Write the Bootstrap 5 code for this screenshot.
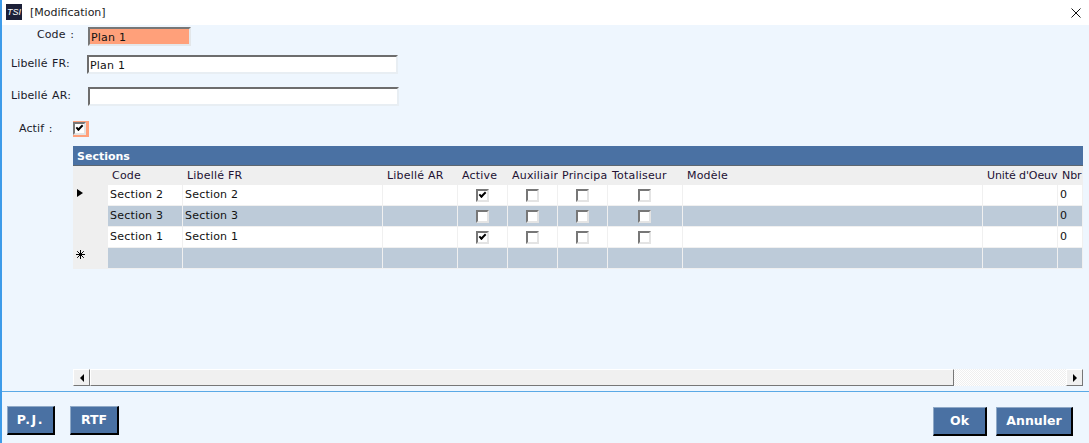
<!DOCTYPE html>
<html lang="fr"><head><meta charset="utf-8"><title>Modification</title>
<link href="https://cdn.jsdelivr.net/npm/bootstrap@5.3.0/dist/css/bootstrap.min.css" rel="stylesheet">
<style>
html,body{height:100%;margin:0}
body{font-family:"DejaVu Sans",Verdana,sans-serif;font-size:11px;line-height:13px;color:#000;background:#eef6fe;overflow:hidden}
.shell{width:1089px;height:443px;border-left:2px solid #3d9be9;display:flex;flex-direction:column}
.titlebar{height:25px;background:#fff;padding-left:4px;font-size:11px;color:#222}
.logo{width:16px;height:16px;background:#1c2038;color:#fff;font:italic 400 9px/16px "Liberation Sans",sans-serif;text-align:center;margin-right:8px;margin-top:-1px}
.closer{margin-left:auto;margin-right:8px}
.formzone{height:121px;position:relative}
.line{display:flex;align-items:flex-start}
.lbl{color:#1a1a2a;letter-spacing:.1px;word-spacing:1px}
.sunk{height:19px;border:2px solid;border-color:#6d6d6d #e8eef3 #e8eef3 #6d6d6d;background:#fff;padding:2px 1px 0 1px;font-size:11px;line-height:13px;color:#111;letter-spacing:.2px}
.sunk.code{background:#ffa07a;width:103px;border-color:#777 #e3e7ea #e3e7ea #777}
.l1{padding:2px 0 0 0;height:30px}.l1 .lbl{margin-left:35px;margin-top:1px;width:51px}
.l2{height:32px}.l2 .lbl{margin-left:9px;margin-top:2px;width:76px}.l2 .sunk{width:311px}
.l3{height:34px}.l3 .lbl{margin-left:9px;margin-top:2px;width:77px}.l3 .sunk{width:311px}
.l4 .lbl{margin-left:17px;margin-top:1px;width:54px}
.focusbox{width:16px;height:16px;background:#ffa07a;padding:1px 3px 3px 0;display:block}
.cb{display:inline-block;width:13px;height:13px;border:2px solid;border-color:#777 #e4e4e4 #e4e4e4 #777;background:#fff;position:relative;vertical-align:top}
.cb.on::after{content:"";position:absolute;left:1px;top:1px;width:7px;height:4px;border-left:2px solid #000;border-bottom:2px solid #000;transform:rotate(-45deg)}
.gridwrap{margin-left:71px;width:1010px;height:223px;position:relative}
.gridtitle{height:20px;background:#4a71a3;border-bottom:1px solid #5d6770;color:#fff;font-weight:700;padding:4px 0 0 4px;line-height:13px}
table.dg{table-layout:fixed;border-collapse:separate;border-spacing:0;width:1010px;letter-spacing:.2px}
table.dg th,table.dg td{padding:0;font-weight:400;overflow:hidden;white-space:nowrap;height:21px;vertical-align:middle}
table.dg thead th{height:19px;background:#efefef;color:#221133;padding-left:4px}
table.dg thead th.tight{letter-spacing:-.1px}
table.dg tbody td{border-right:1px solid #f0f0f0;border-bottom:1px solid #f0f0f0;background:#fff;padding-left:2px;padding-bottom:1px;color:#111}
table.dg tbody tr.alt td{background:#bdcbd9}
table.dg tbody td.rh,table.dg tbody tr.alt td.rh{background:#efefef;border:0;padding:0;position:relative}
table.dg tbody td.ct{text-align:center;padding:0 1px 0 0;line-height:0}
.arrow{position:absolute;left:4px;top:4px;width:0;height:0;border-left:6px solid #000;border-top:4px solid transparent;border-bottom:4px solid transparent}
.star{position:absolute;left:3px;top:2px}
.hscroll{position:absolute;left:0;top:223px;width:1010px;height:17px;display:flex;background:repeating-conic-gradient(#fff 0 25%,#efefef 0 50%) 0 0/2px 2px}
.sbtn{width:17px;height:17px;background:#f0f0f0;border:1px solid;border-color:#fff #777 #777 #fff;display:flex;align-items:center;justify-content:center}
.sthumb{width:864px;height:17px;background:#f0f0f0;border:1px solid;border-color:#fff #777 #777 #fff}
.ar-l{border-right:4px solid #000;border-top:4px solid transparent;border-bottom:4px solid transparent}
.ar-r{border-left:4px solid #000;border-top:4px solid transparent;border-bottom:4px solid transparent}
.rule{position:absolute;left:2px;top:391px;width:1087px;height:1px;background:#5aa9e6}
.foot{position:absolute;left:2px;top:406px;width:1087px;height:30px}
.tbtn{position:absolute;border:0;background:#4a71a3;color:#fff;font-weight:700;font-size:12.5px;line-height:14px;padding:0;text-align:center;border-top:1px solid #8fa9c7;border-left:1px solid #8fa9c7;border-right:2px solid #000;border-bottom:2px solid #000;border-radius:0}
.b1{left:5px;top:0;width:48px;height:29px;letter-spacing:1.6px}.b2{left:68px;top:0;width:49px;height:29px}
.b3{left:931px;top:1px;width:54px;height:29px}.b4{left:994px;top:1px;width:77px;height:29px}
</style></head><body>
<div class="shell">
<div class="titlebar d-flex align-items-center"><span class="logo">TSI</span><span>[Modification]</span>
<svg class="closer" width="10" height="10" viewBox="0 0 10 10"><path d="M.5.5l9 9M9.5.5l-9 9" stroke="#111" stroke-width="1" fill="none"/></svg></div>
<div class="formzone">
<div class="line l1"><span class="lbl">Code :</span><div class="sunk code">Plan 1</div></div>
<div class="line l2"><span class="lbl">Libellé FR:</span><div class="sunk">Plan 1</div></div>
<div class="line l3"><span class="lbl">Libellé AR:</span><div class="sunk"></div></div>
<div class="line l4"><span class="lbl">Actif :</span><span class="focusbox"><span class="cb on"></span></span></div>
</div>
<div class="gridwrap">
<div class="gridtitle">Sections</div>
<table class="dg">
<colgroup><col style="width:35px"><col style="width:75px"><col style="width:200px"><col style="width:75px"><col style="width:50px"><col style="width:50px"><col style="width:50px"><col style="width:75px"><col style="width:300px"><col style="width:75px"><col style="width:25px"></colgroup>
<thead><tr><th></th><th>Code</th><th>Libellé FR</th><th>Libellé AR</th><th>Active</th><th>Auxiliair</th><th>Principa</th><th>Totaliseur</th><th>Modèle</th><th class="tight">Unité d'Oeuv</th><th class="tight">Nbr</th></tr></thead>
<tbody>
<tr><td class="rh"><span class="arrow"></span></td><td>Section 2</td><td>Section 2</td><td></td><td class="ct"><span class="cb on"></span></td><td class="ct"><span class="cb"></span></td><td class="ct"><span class="cb"></span></td><td class="ct"><span class="cb"></span></td><td></td><td></td><td>0</td></tr>
<tr class="alt"><td class="rh"></td><td>Section 3</td><td>Section 3</td><td></td><td class="ct"><span class="cb"></span></td><td class="ct"><span class="cb"></span></td><td class="ct"><span class="cb"></span></td><td class="ct"><span class="cb"></span></td><td></td><td></td><td>0</td></tr>
<tr><td class="rh"></td><td>Section 1</td><td>Section 1</td><td></td><td class="ct"><span class="cb on"></span></td><td class="ct"><span class="cb"></span></td><td class="ct"><span class="cb"></span></td><td class="ct"><span class="cb"></span></td><td></td><td></td><td>0</td></tr>
<tr class="alt"><td class="rh"><svg class="star" width="9" height="9" viewBox="0 0 9 9"><path d="M4.5 0v9M0 4.5h9M1.2 1.2l6.6 6.6M7.8 1.2L1.2 7.8" stroke="#000" stroke-width="1" fill="none"/></svg></td><td></td><td></td><td></td><td></td><td></td><td></td><td></td><td></td><td></td><td></td></tr>
</tbody></table>
<div class="hscroll"><div class="sbtn"><span class="ar-l"></span></div><div class="sthumb"></div><div class="sbtn ms-auto"><span class="ar-r"></span></div></div>
</div>
<div class="rule"></div>
<div class="foot"><button class="btn tbtn b1">P.J.</button><button class="btn tbtn b2">RTF</button><button class="btn tbtn b3">Ok</button><button class="btn tbtn b4">Annuler</button></div>
</div>
<script src="https://cdn.jsdelivr.net/npm/bootstrap@5.3.0/dist/js/bootstrap.bundle.min.js"></script>
</body></html>
